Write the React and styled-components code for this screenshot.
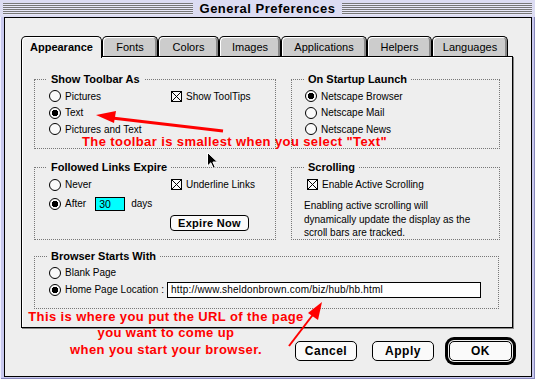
import React from "react";
import styled, { createGlobalStyle } from "styled-components";

const GlobalStyle = createGlobalStyle`
  html, body { margin: 0; padding: 0; background: #fff; }
  body { font-family: "Liberation Sans", Arial, sans-serif; color: #000; }
`;

const tabs = [
  { label: "Appearance", width: 81, active: true },
  { label: "Fonts", width: 56 },
  { label: "Colors", width: 61 },
  { label: "Images", width: 62 },
  { label: "Applications", width: 86 },
  { label: "Helpers", width: 65 },
  { label: "Languages", width: 76 },
];

function Radio({ on, children }) {
  return (
    <Option>
      <RadioMark $on={on} />
      {children}
    </Option>
  );
}

function Check({ children }) {
  return (
    <Option>
      <CheckMark />
      {children}
    </Option>
  );
}

export default function App() {
  return (
    <>
      <GlobalStyle />
      <Window>
        <TitleBar>
          <Stripes />
          <Title>General Preferences</Title>
          <Stripes />
        </TitleBar>
        <Body>
          <TabStrip>
            {tabs.map((t) => (
              <Tab key={t.label} $w={t.width} $active={t.active}>
                {t.label}
              </Tab>
            ))}
          </TabStrip>
          <Panel>
            <Row $cols="242px 209px">
              <Group $h={70} $pad="8px 0 0 14px">
                <Legend>Show Toolbar As</Legend>
                <OptionGrid>
                  <Radio>Pictures</Radio>
                  <Check>Show ToolTips</Check>
                  <Radio on>Text</Radio>
                  <span />
                  <Radio>Pictures and Text</Radio>
                </OptionGrid>
              </Group>
              <Group $h={70} $pad="8px 0 0 13px">
                <Legend>On Startup Launch</Legend>
                <OptionGrid>
                  <Radio on>Netscape Browser</Radio>
                  <span />
                  <Radio>Netscape Mail</Radio>
                  <span />
                  <Radio>Netscape News</Radio>
                </OptionGrid>
              </Group>
            </Row>
            <Row $cols="242px 209px" $mt={18}>
              <Group $h={73} $pad="8px 0 0 14px">
                <Legend>Followed Links Expire</Legend>
                <ExpireGrid>
                  <Radio>Never</Radio>
                  <Check>Underline Links</Check>
                  <AfterRow>
                    <Radio on>After</Radio>
                    <DaysField>30</DaysField>
                    <span>days</span>
                  </AfterRow>
                  <span />
                  <span />
                  <SmallButton>Expire Now</SmallButton>
                </ExpireGrid>
              </Group>
              <Group $h={73} $pad="8px 0 0 15px">
                <Legend>Scrolling</Legend>
                <OptionLine>
                  <Check>Enable Active Scrolling</Check>
                </OptionLine>
                <Help>
                  Enabling active scrolling will
                  <br />
                  dynamically update the display as the
                  <br />
                  scroll bars are tracked.
                </Help>
              </Group>
            </Row>
            <Row $cols="465px" $mt={16}>
              <Group $h={53} $pad="7px 0 0 14px">
                <Legend>Browser Starts With</Legend>
                <OptionLine>
                  <Radio>Blank Page</Radio>
                </OptionLine>
                <HomeRow>
                  <Radio on>Home Page Location :</Radio>
                  <UrlField>http://www.sheldonbrown.com/biz/hub/hb.html</UrlField>
                </HomeRow>
              </Group>
            </Row>
          </Panel>
          <ButtonRow>
            <Button>Cancel</Button>
            <Button>Apply</Button>
            <Button $default>OK</Button>
          </ButtonRow>
        </Body>

        <Note $left={82} $top={135}>
          The toolbar is smallest when you select "Text"
        </Note>
        <NoteBlock>
          This is where you put the URL of the page
          <br />
          you want to come up
          <br />
          when you start your browser.
        </NoteBlock>
        <Overlay width="535" height="379" viewBox="0 0 535 379">
          <line x1="223" y1="131" x2="112" y2="118" stroke="#ff0000" strokeWidth="3" />
          <polygon points="96,115 116,111 114,123" fill="#ff0000" />
          <line x1="289" y1="346" x2="315" y2="312" stroke="#ff0000" strokeWidth="2" />
          <polygon points="322,302 318,320 308,313" fill="#ff0000" />
          <path
            d="M207.5 152.5 L207.5 166 L210.8 162.8 L213.3 168.3 L215.3 167.4 L212.9 162 L217.5 162 Z"
            fill="#000"
            stroke="#fff"
            strokeWidth="1"
          />
        </Overlay>
      </Window>
    </>
  );
}

const Window = styled.div`
  position: relative;
  width: 535px;
  height: 379px;
  box-sizing: border-box;
  display: flex;
  flex-direction: column;
  background: #c8c8ee;
  box-shadow: inset 1px 1px 0 #eeeeff, inset -1px -1px 0 #8888bb;
`;

const TitleBar = styled.div`
  height: 17px;
  display: flex;
  align-items: center;
  padding: 0 3px;
  background: #dcdcf2;
`;

const Stripes = styled.div`
  flex: 1;
  height: 12px;
  background: repeating-linear-gradient(to bottom, #777 0 1px, #e8e8f8 1px 2px);
`;

const Title = styled.div`
  padding: 0 7px;
  font-size: 13px;
  font-weight: 700;
  letter-spacing: 0.5px;
  line-height: 17px;
`;

const Body = styled.div`
  flex: 1;
  margin: 0 3px 2px 4px;
  border: 1px solid #000;
  background: #eeeeee;
  padding: 18px 0 0 16px;
  display: flex;
  flex-direction: column;
`;

const TabStrip = styled.div`
  display: flex;
  align-items: flex-end;
  height: 20px;
`;

const Tab = styled.div`
  box-sizing: border-box;
  width: ${(p) => p.$w}px;
  height: ${(p) => (p.$active ? 22 : 20)}px;
  margin-bottom: ${(p) => (p.$active ? -2 : 0)}px;
  border: 1px solid #000;
  border-bottom: none;
  border-radius: 5px 5px 0 0;
  background: ${(p) => (p.$active ? "#eeeeee" : "#cccccc")};
  box-shadow: inset 1px 1px 0 #fff
    ${(p) => (p.$active ? "" : ", inset -2px 0 0 #888")};
  display: flex;
  align-items: center;
  justify-content: center;
  padding-bottom: ${(p) => (p.$active ? 2 : 0)}px;
  font-size: 11px;
  font-weight: ${(p) => (p.$active ? 700 : 400)};
  position: relative;
  z-index: 1;
`;

const Panel = styled.div`
  box-sizing: border-box;
  width: 492px;
  height: 272px;
  border: 1px solid #000;
  background: #eeeeee;
  box-shadow: inset 1px 1px 0 #fff, 1px 1px 0 #888;
  padding: 22px 12px 0 12px;
  display: flex;
  flex-direction: column;
`;

const Row = styled.div`
  display: grid;
  grid-template-columns: ${(p) => p.$cols};
  column-gap: 15px;
  margin-top: ${(p) => p.$mt || 0}px;
`;

const Group = styled.div`
  position: relative;
  box-sizing: border-box;
  height: ${(p) => p.$h}px;
  border: 1px dotted #777;
  padding: ${(p) => p.$pad};
`;

const Legend = styled.span`
  position: absolute;
  top: -8px;
  left: 12px;
  padding: 0 4px;
  background: #eeeeee;
  font-size: 11px;
  font-weight: 700;
  line-height: 14px;
`;

const OptionGrid = styled.div`
  display: grid;
  grid-template-columns: 122px 1fr;
  grid-auto-rows: 16.5px;
  align-items: center;
`;

const ExpireGrid = styled.div`
  display: grid;
  grid-template-columns: 122px 1fr;
  grid-template-rows: 17px 21px 17px;
  align-items: center;
`;

const AfterRow = styled.div`
  display: flex;
  align-items: center;
  font-size: 10px;
  white-space: nowrap;
`;

const DaysField = styled.div`
  box-sizing: border-box;
  width: 30px;
  height: 14px;
  margin: 0 6px 0 9px;
  border: 1px solid #000;
  background: #00ffff;
  font-size: 10.5px;
  line-height: 12px;
  padding-left: 3px;
`;

const OptionLine = styled.div`
  height: 17px;
  display: flex;
  align-items: center;
`;

const HomeRow = styled.div`
  height: 17px;
  display: grid;
  grid-template-columns: 118px 314px;
  align-items: center;
`;

const Option = styled.label`
  display: flex;
  align-items: center;
  gap: 4px;
  font-size: 10px;
  white-space: nowrap;
`;

const RadioMark = styled.span`
  box-sizing: border-box;
  width: 12px;
  height: 12px;
  flex: none;
  border: 1px solid #000;
  border-radius: 50%;
  background: ${(p) =>
    p.$on ? "radial-gradient(circle, #000 0 3px, #fafafa 3.5px)" : "#fafafa"};
`;

const CheckMark = styled.span`
  box-sizing: border-box;
  width: 11px;
  height: 11px;
  flex: none;
  border: 1px solid #000;
  background:
    linear-gradient(45deg, transparent calc(50% - 0.7px), #000 50%, transparent calc(50% + 0.7px)),
    linear-gradient(-45deg, transparent calc(50% - 0.7px), #000 50%, transparent calc(50% + 0.7px)),
    #fafafa;
`;

const Help = styled.p`
  margin: 6px 0 0 -3px;
  font-size: 10px;
  line-height: 13.5px;
`;

const UrlField = styled.div`
  box-sizing: border-box;
  height: 16px;
  border: 1px solid #000;
  background: #fff;
  padding-left: 3px;
  font-size: 10px;
  line-height: 14px;
  letter-spacing: 0.2px;
`;

const SmallButton = styled.div`
  box-sizing: border-box;
  width: 79px;
  height: 16px;
  margin-left: -1px;
  border: 1px solid #000;
  border-radius: 4px;
  background: #fafafa;
  display: flex;
  align-items: center;
  justify-content: center;
  font-size: 11px;
  font-weight: 700;
  letter-spacing: 0.3px;
`;

const ButtonRow = styled.div`
  display: flex;
  justify-content: flex-end;
  align-items: center;
  gap: 15px;
  margin-top: 13px;
  padding-right: 19px;
`;

const Button = styled.div`
  box-sizing: border-box;
  width: ${(p) => (p.$default ? 63 : 62)}px;
  height: 20px;
  border: 1px solid #000;
  border-radius: 5px;
  background: #fafafa;
  display: flex;
  align-items: center;
  justify-content: center;
  font-size: 12px;
  font-weight: 700;
  letter-spacing: 0.5px;
  box-shadow: ${(p) => (p.$default ? "0 0 0 1px #eeeeee, 0 0 0 4px #000" : "none")};
`;

const Note = styled.div`
  position: absolute;
  left: ${(p) => p.$left}px;
  top: ${(p) => p.$top}px;
  color: #ff0000;
  font-size: 13px;
  font-weight: 700;
  line-height: 13px;
  letter-spacing: 0.4px;
  white-space: nowrap;
`;

const NoteBlock = styled.div`
  position: absolute;
  left: 20px;
  top: 309px;
  width: 292px;
  text-align: center;
  color: #ff0000;
  font-size: 13px;
  font-weight: 700;
  line-height: 16.3px;
  letter-spacing: 0.4px;
  white-space: nowrap;
`;

const Overlay = styled.svg`
  position: absolute;
  left: 0;
  top: 0;
  pointer-events: none;
`;
